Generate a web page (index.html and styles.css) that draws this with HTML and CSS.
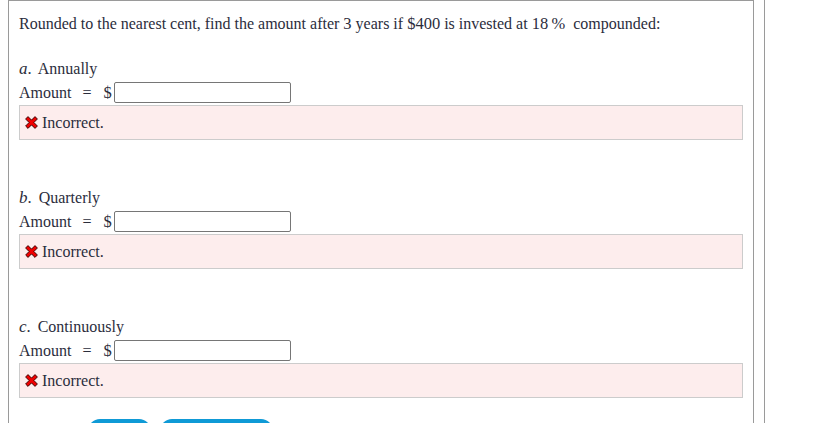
FILE: index.html
```html
<!DOCTYPE html>
<html>
<head>
<meta charset="utf-8">
<link rel="stylesheet" href="styles.css">
</head>
<body>
<div class="page">
  <div class="panel">
    <p class="question">Rounded to the nearest cent, find the amount after <span class="m">3</span> years if <span class="m">$400</span> is invested at <span class="m">18&thinsp;%</span>&nbsp; compounded:</p>

    <div class="part">
      <div class="label"><span class="mi">a</span><span class="m dot">.</span> Annually</div>
      <div class="row"><span>Amount</span><span class="eq">=</span><span class="m">$</span><span class="input"></span></div>
      <div class="error"><svg class="x" viewBox="0 0 13 13" width="13" height="13"><path d="M0.6 3 L3 0.6 L6.5 4.1 L10 0.6 L12.4 3 L8.9 6.5 L12.4 10 L10 12.4 L6.5 8.9 L3 12.4 L0.6 10 L4.1 6.5 Z" fill="#f00000" stroke="#2a0000" stroke-width="0.9" stroke-linejoin="miter"/></svg><span>Incorrect.</span></div>
    </div>

    <div class="part">
      <div class="label"><span class="mi">b</span><span class="m dot">.</span> Quarterly</div>
      <div class="row"><span>Amount</span><span class="eq">=</span><span class="m">$</span><span class="input"></span></div>
      <div class="error"><svg class="x" viewBox="0 0 13 13" width="13" height="13"><path d="M0.6 3 L3 0.6 L6.5 4.1 L10 0.6 L12.4 3 L8.9 6.5 L12.4 10 L10 12.4 L6.5 8.9 L3 12.4 L0.6 10 L4.1 6.5 Z" fill="#f00000" stroke="#2a0000" stroke-width="0.9" stroke-linejoin="miter"/></svg><span>Incorrect.</span></div>
    </div>

    <div class="part">
      <div class="label"><span class="mi">c</span><span class="m dot">.</span> Continuously</div>
      <div class="row"><span>Amount</span><span class="eq">=</span><span class="m">$</span><span class="input"></span></div>
      <div class="error"><svg class="x" viewBox="0 0 13 13" width="13" height="13"><path d="M0.6 3 L3 0.6 L6.5 4.1 L10 0.6 L12.4 3 L8.9 6.5 L12.4 10 L10 12.4 L6.5 8.9 L3 12.4 L0.6 10 L4.1 6.5 Z" fill="#f00000" stroke="#2a0000" stroke-width="0.9" stroke-linejoin="miter"/></svg><span>Incorrect.</span></div>
    </div>

    <div class="buttons">
      <span class="btn btn-a"></span>
      <span class="btn btn-b"></span>
    </div>
  </div>
  <div class="rail"></div>
</div>
</body>
</html>
```

FILE: styles.css
```css
html, body {
  margin: 0;
  padding: 0;
  background: #ffffff;
}
body {
  font-family: "Liberation Serif", "Times New Roman", serif;
  font-size: 16px;
  color: #2b2d3c;
}
.page {
  display: flex;
  height: 423px;
  overflow: hidden;
}
.panel {
  margin-left: 8px;
  width: 724px;
  padding: 0 10px;
  border: 1px solid #9a9a9a;
  border-bottom: none;
  flex: none;
}
.rail {
  width: 1px;
  margin-left: 10px;
  background: #9a9a9a;
  flex: none;
}
.question {
  margin: 13px 0 0 0;
  line-height: 20px;
}
.m {
  font-size: 16.5px;
}
.mi {
  font-size: 17px;
  font-style: italic;
}
.dot {
  margin-right: 3px;
}
.part {
  margin-top: 25px;
}
.part + .part {
  margin-top: 48px;
}
.label {
  line-height: 20px;
}
.row {
  display: flex;
  align-items: center;
  height: 21px;
  margin-top: 3px;
}
.eq {
  margin: 0 12px 0 11px;
  font-size: 16px;
}
.input {
  display: inline-block;
  width: 175px;
  height: 19px;
  border: 1px solid #767676;
  border-radius: 2px;
  margin-left: 2px;
}
.error {
  display: flex;
  align-items: center;
  gap: 4px;
  height: 33px;
  margin-top: 2px;
  padding: 0 5px;
  background: #fdeded;
  border: 1px solid #cccccc;
}
.error .x {
  flex: none;
}
.buttons {
  display: flex;
  gap: 9px;
  margin: 21px 0 0 69px;
}
.btn {
  display: inline-block;
  height: 30px;
  border-radius: 12px;
  background: #0f9ad6;
}
.btn-a {
  width: 63px;
}
.btn-b {
  width: 113px;
}
```
